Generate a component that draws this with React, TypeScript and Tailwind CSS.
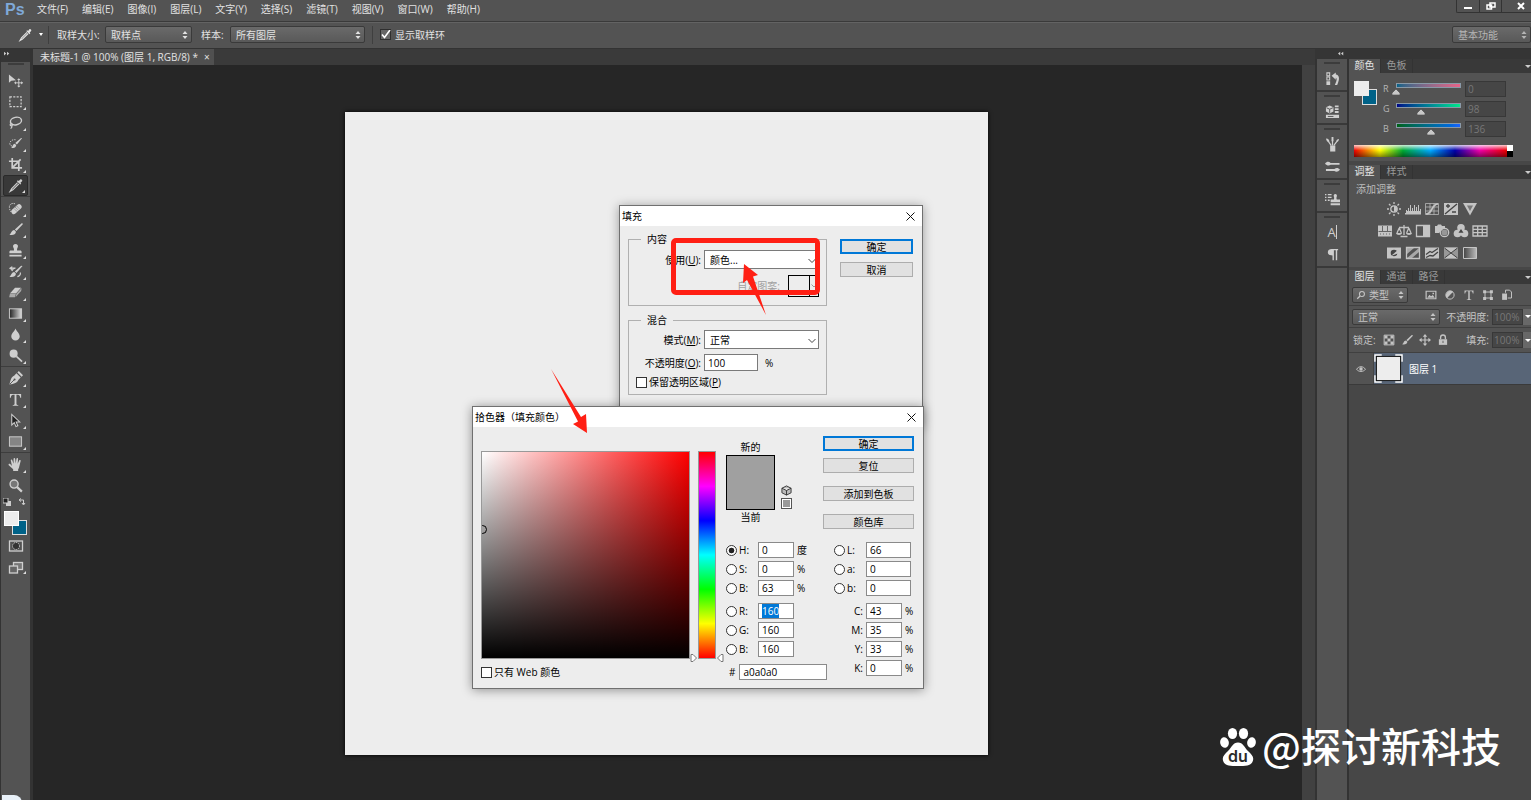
import { useEffect, useRef, useState } from 'react';
import type { ReactNode } from 'react';

const MENUS = ['文件(F)', '编辑(E)', '图像(I)', '图层(L)', '文字(Y)', '选择(S)', '滤镜(T)', '视图(V)', '窗口(W)', '帮助(H)'];

function Icon({ children, className = 'w-4 h-4' }: { children: ReactNode; className?: string }) {
  return (
    <svg viewBox="0 0 16 16" fill="currentColor" className={`shrink-0 ${className}`} aria-hidden="true">
      {children}
    </svg>
  );
}

const line = { fill: 'none', stroke: 'currentColor', strokeWidth: 1.3 };

const ICONS: Record<string, ReactNode> = {
  move: <><path d="M1 1.500v9l2.500-2.200 5-.6z" /><path {...line} strokeWidth={1} d="M11.5 6.500v8M7.500 10.500h8" /><path d="M11.500 5.500l1.800 2h-3.600zM11.500 15.500l1.800-2h-3.600zM6.500 10.500l2-1.800v3.600zM16 10.500l-2-1.800v3.600z" /></>,
  marquee: <rect {...line} x="2" y="3" width="12" height="10.500" strokeDasharray="2.200 1.400" />,
  lasso: <><ellipse {...line} strokeWidth={1.500} cx="8.500" cy="6.500" rx="6" ry="4" transform="rotate(-12 8.500 6.500)" /><path {...line} d="M3.500 9.200c-1.800.3-1.500 2.500.2 2.300 1.500-.2 1.300-1.800.2-2.300M4 11.500c.5 1.300-.3 2.500-1.300 2.800" /></>,
  quick: <><path {...line} strokeWidth={1} strokeDasharray="1.500 1.200" d="M7 10.500C4 11.500 1.500 10 2 7.500S5 3.500 8 4" /><path d="M15 2.500L9.500 9l-1.800-1.500L14 2zM8.800 9.700L7 8.200C5 8.500 5.500 11 3.500 12.500c2.500 1 5 .3 5.300-2.800z" /></>,
  crop: <path {...line} strokeWidth={1.800} d="M4.500 1v10.500H15M1 4.500h10.500V15M13.500 2.500l-8 8" />,
  dropper: <><path d="M9.500 3.500l1-1 1 .800 1.500-1.800c1-1 3 .800 2 2L13.300 5l.8 1-1 1z" /><path {...line} d="M10.200 5L4 11.200 2.300 14.200 5.200 12.600 11.600 6.300" /></>,
  heal: <><path {...line} strokeWidth={1} strokeDasharray="1.500 1" d="M7.500 3C4 1.500 1 4 1.500 7s1 4 1.500 4.500" /><rect x="2.500" y="6" width="13" height="5.500" rx="2.500" transform="rotate(-42 9 8.700)" /><path d="M7.800 6.700l3.500 3.500M6.700 8.300l3 3M9.500 5.700l3 3" stroke="#555" strokeWidth=".8" strokeDasharray="1 .800" /></>,
  brush: <path d="M15.500 1.500c.5.500.3 1-.2 1.500L9 9.500 7.300 8 14 1.800c.5-.4 1-.6 1.500-.3zM6.700 8.600l1.800 1.700c-.3 3-3.500 4.200-7 3.200 2.200-.8 1.800-4.600 5.200-4.900z" />,
  stamp: <path d="M8 1a2.600 2.600 0 0 1 2.300 3.800c-.6 1-.8 2-.6 3.200H13c1 0 1.500.6 1.500 1.500V11h-13V9.500C1.500 8.600 2 8 3 8h3.300c.2-1.200 0-2.200-.6-3.200A2.600 2.600 0 0 1 8 1zM1.500 12.500h13v2h-13z" />,
  history: <><path d="M15.500 2L9 9.500 7.300 8 14 1.800zM6.700 8.600l1.800 1.700c-.3 3-3.500 4.200-7 3.200 2.200-.8 1.800-4.600 5.200-4.900z" /><path {...line} d="M3 4.500h5c-2 0-3 1-4 3M13 9c1 2-1 4-3 4.500" /><path d="M1 4.500L4.500 2v5z" /></>,
  eraser: <><path d="M7.500 3h6.500L8.500 9H2z" /><path d="M2 9.600h6.300l-.8 3.400H1.200zM9 9.300L14.600 3.200l-.6 3.300L8.200 12.800z" opacity=".7" /></>,
  gradient: <><defs><linearGradient id="g1"><stop stopColor="#222" /><stop offset="1" stopColor="#ddd" /></linearGradient></defs><rect x="1.500" y="3" width="13" height="10" fill="url(#g1)" stroke="currentColor" /></>,
  blur: <path d="M8 1.500c1 3 4.500 5 4.500 8.500a4.500 4.500 0 0 1-9 0C3.500 6.500 7 4.500 8 1.500z" />,
  dodge: <><circle cx="6" cy="6" r="4.300" /><path {...line} strokeWidth={1.800} d="M9 9l6 5.500" /></>,
  pen: <><path d="M9 2.500l4.500 4.500L11 9.500c-1 3-4.500 3.800-9.500 5 1.300-5 2-8.500 5-9.500z" /><path d="M10 1.500L11.500 0 16 4.500 14.500 6z" /><path d="M2 14l4.500-4.500" stroke="#535353" /><circle cx="7" cy="9" r="1.100" fill="#535353" /></>,
  text: <path d="M2 2h12v4h-1C12.700 3.800 12 3 10.500 3H9v9.500c0 1 .5 1.300 2 1.500v.7H5V14c1.500-.2 2-.5 2-1.500V3H5.500C4 3 3.300 3.800 3 6H2z" />,
  path: <path d="M4 1.500v11.300l2.700-2.500 1.800 4.200 2-.9-1.800-4H12.500z" fill="#222" stroke="currentColor" strokeWidth="1.100" />,
  rect: <rect x="1.500" y="3" width="13" height="10" fill="#858585" stroke="currentColor" />,
  hand: <path d="M4.200 9.500L3 3.800c-.2-1 1.200-1.500 1.600-.4L6 7.300 5.900 2c0-1.200 1.700-1.200 1.800 0L8.200 7 9 1.800c.2-1.200 1.800-1 1.700.2L10.300 7.300l1.600-3.600c.5-1 1.900-.5 1.600.5L12 10c-.3 1.500-.5 2-1.200 3v2H5.500v-2L.8 8.800C0 7.800 1.300 6.800 2.300 7.500z" />,
  zoom: <><circle cx="6.500" cy="6.500" r="4.300" fill="#777" stroke="currentColor" strokeWidth="1.500" /><path {...line} strokeWidth={2.400} d="M9.800 9.800l5 4.700" /></>,
  mask: <><rect {...line} x="1.500" y="3" width="13" height="10" /><circle cx="8" cy="8" r="3.500" fill="#333" stroke="currentColor" strokeDasharray="1.200 .8" /></>,
  screen: <><rect {...line} x="5.500" y="2.500" width="9" height="7" fill="#777" /><rect {...line} x="1.500" y="6" width="8" height="7" fill="#666" /></>,
  histPanel: <><path {...line} strokeWidth={1.100} d="M2 2h3v3H2zM2 6.500h3v3H2z" /><path d="M1.500 11h4v4h-4zM7 5l4.500-3.500v2.300c4 .3 4.500 5 1.500 11h-2.500c2-3.500 2.500-7 1-7.500v2z" /></>,
  propPanel: <><path d="M1 3.500l4-2 4 2v4.500l-4 2-4-2zM10.500 1.500h4v2h-4zM10.500 4.500h4v2h-4zM10.500 7.500h4v2h-4zM1 11.500h14V15H1z" /><path d="M1.500 4l3.500 1.500L8.500 4M5 5.500V9.500M3 13.300h6" stroke="#555" fill="none" /></>,
  brushes: <><path d="M5.500 9h5.500v6.500H5.500z" /><path {...line} d="M6.500 9L3.500 4.500M8 9V3M9.500 9l3-4" /><path d="M1 1.500c3 0 4 2 3.500 4C2.500 5.500 1.500 4 1 1.500zM7 0h2v4.500H7zM15 2c-.5 2.500-1.500 3.500-3 3.500C11.500 3.500 13 2 15 2z" /></>,
  presets: <><path d="M0 5c2-2.500 4-2.500 6-.8h9.500v2H6C4 7.500 2 7 0 5zM16 11.500c-2-2.500-4-2.500-6-.8H1v2h9c2 1.500 4 1 6-1.200z" /></>,
  clone: <><path d="M11 2c1.500 0 2.200 1.500 1.500 3-.4.800-.3 2 0 3H16v3H6V8h3.500c.3-1 .4-2.200 0-3C8.800 3.500 9.500 2 11 2zM6 12h10v2H6zM0 2h1.500v1.500H0zM3 2h4v1.500H3zM0 5h1.500v1.500H0zM3 5h4v1.500H3zM0 8h1.500v1.500H0zM3 8h2v1.500H3z" /></>,
  para: <path d="M7 2h7v1.500h-1V14h-1.500V3.500h-2V14H8V9C5 9 3 8 3 5.500S5 2 7 2z" />,
  sun: <><circle {...line} cx="8" cy="8" r="3.200" /><path d="M8 5v6a3 3 0 0 0 0-6z" /><path {...line} d="M8 1v2M8 13v2M1 8h2M13 8h2M3 3l1.500 1.500M11.500 11.500L13 13M3 13l1.500-1.500M11.500 4.500L13 3" /></>,
  levels: <path d="M0 12h16v1.500H0zM1 9h1v3H1zM3 7h1v5H3zM5 4h1v8H5zM7 7h1v5H7zM9 4h1v8H9zM11 6h1v6h-1zM13 4h1v8h-1zM15 8h1v4h-1zM2 10h13v2H2z" />,
  curves: <><path {...line} strokeWidth={1} d="M1.500 2.500h13v11h-13zM1.500 6h13M1.500 10h13M6 2.500v11M10 2.500v11" opacity=".7" /><path {...line} strokeWidth={1.700} d="M2 13c7 0 5-10 12-10" /></>,
  exposure: <><path d="M1 2h14v12H1z" /><path d="M2 13L14 3M3 5h4M5 3v4M9 11h4" stroke="#444" strokeWidth="1.300" /></>,
  vibrance: <><path d="M1 2h14L8 14.500z" /><path d="M5 4.500h6L8 10z" fill="#777" /></>,
  hue: <><path d="M1 2.500h14v11H1z" /><path d="M1.500 8.500h13M5.500 3v5M10.500 3v5M3 11h1M6 11h1M9 11h1M12 11h1" stroke="#666" /></>,
  balance: <><path {...line} d="M8 2v10M3 4.500h10M4.500 13.500h7M3.200 5L1 10M3.200 5l2.200 5M12.800 5l-2.200 5M12.800 5L15 10" /><path d="M0 10h6c0 2.500-6 2.500-6 0zM10 10h6c0 2.500-6 2.500-6 0z" /></>,
  bw: <><path {...line} d="M1.500 2.500h13v11h-13z" /><path d="M8 2.500h6.500v11H8z" /></>,
  photo: <><path d="M1 3h2l1-1.500h3L8 3h3v3H9L5 10H1z" /><circle {...line} cx="10.500" cy="9.500" r="4.200" /><circle cx="10.500" cy="9.500" r="3" opacity=".6" /></>,
  mixer: <><circle cx="8" cy="4.800" r="3.800" /><circle cx="4.500" cy="10.500" r="3.800" /><circle cx="11.500" cy="10.500" r="3.800" /><path d="M8 6l2.500 3.800h-5z" fill="#444" /></>,
  lut: <><path {...line} d="M1 3h14v10H1zM1 6.300h14M1 9.700h14M5.700 3v10M10.300 3v10" /></>,
  invert: <><path d="M1 2.500h14v11H1z" /><circle cx="8" cy="8" r="3.300" fill="#444" /><path d="M5 11L13 4v4z" /></>,
  poster: <><path {...line} d="M1.500 2.500h13v11h-13z" /><path d="M2 13l12-10v4L7 13zM2 3h7L2 9z" opacity=".75" /></>,
  thresh: <><path d="M1 2.500h14v11H1z" /><path d="M2 9.500l4-3 2 1 6-4M2 12.500l4-2 3 .5 5-4" stroke="#444" strokeWidth="1.300" fill="none" /></>,
  select: <><path d="M1 2.500h14v11H1z" opacity=".6" /><path d="M1 2.500L8 8l7-5.500zM1 13.500L8 8l7 5.500z" /><path d="M1.500 3l13 10M1.500 13l13-10" stroke="#444" /></>,
  map: <><defs><linearGradient id="g2"><stop stopColor="#444" /><stop offset="1" stopColor="#bbb" /></linearGradient></defs><path d="M1.500 2.500h13v11h-13z" fill="url(#g2)" stroke="currentColor" /></>,
  image: <><path {...line} strokeWidth={1.600} d="M1.500 3h13v10h-13z" /><path d="M3 11.500l3-4 2 2 2.500-1.500 2.500 3.500zM10 5h2v2h-2z" /></>,
  adjust: <><circle {...line} cx="8" cy="8" r="5.500" /><path d="M3.800 12.200A6 6 0 0 1 12.200 3.800z" /></>,
  shape: <><path {...line} d="M4 4h8v8H4z" /><path d="M1.500 1.500h4v4h-4zM10.500 1.500h4v4h-4zM1.500 10.500h4v4h-4zM10.500 10.500h4v4h-4z" /></>,
  smart: <><path d="M1.500 6H8v8.500H1.500z" /><path {...line} d="M6 5V1.500h5.500L14 4v8H9" /></>,
  find: <><circle {...line} strokeWidth={1.700} cx="9.500" cy="6.500" r="4" /><path {...line} strokeWidth={2} d="M6.500 9.500L2 14" /></>,
  checker: <><path {...line} d="M1.500 1.500h13v13h-13z" /><path d="M2 2h4v4H2zM10 2h4v4h-4zM6 6h4v4H6zM2 10h4v4H2zM10 10h4v4h-4z" /></>,
  arrows: <><path {...line} strokeWidth={1.600} d="M8 2v12M2 8h12" /><path d="M8 0l3 3.500H5zM8 16l3-3.500H5zM0 8l3.500-3v6zM16 8l-3.500-3v6z" /></>,
  lock: <><path {...line} strokeWidth={1.800} d="M4.800 7V4.500a3.200 3.200 0 0 1 6.400 0V7" /><path d="M2.500 7h11v7.500h-11z" /><path d="M7.500 9h1v3h-1z" fill="#444" /></>,
  eye: <><path {...line} strokeWidth={1.600} d="M1 8.500c3-5.500 11-5.500 14 0-3 4.500-11 4.500-14 0z" /><circle cx="8" cy="8" r="2.800" /></>,
};

const TOOLS = [
  [['move', '移动'], ['marquee', '选框'], ['lasso', '套索'], ['quick', '快速选择'], ['crop', '裁剪'], ['dropper', '吸管']],
  [['heal', '修复画笔'], ['brush', '画笔'], ['stamp', '图章'], ['history', '历史画笔'], ['eraser', '橡皮擦'], ['gradient', '渐变'], ['blur', '模糊'], ['dodge', '减淡']],
  [['pen', '钢笔'], ['text', '文字'], ['path', '路径选择'], ['rect', '矩形']],
  [['hand', '抓手'], ['zoom', '缩放']],
];

const DOCK = [['histPanel'], ['propPanel'], ['brushes', 'presets'], ['clone'], ['char', 'para']];

const ADJUST = [
  ['sun', 'levels', 'curves', 'exposure', 'vibrance'],
  ['hue', 'balance', 'bw', 'photo', 'mixer', 'lut'],
  ['invert', 'poster', 'thresh', 'select', 'map'],
];

const CHANNELS = [
  { name: 'R', value: 0, track: 'bg-linear-to-r from-[#006288] to-[#e86288]' },
  { name: 'G', value: 98, track: 'bg-linear-to-r from-[#000088] to-[#10e888]' },
  { name: 'B', value: 136, track: 'bg-linear-to-r from-[#006210] to-[#1c62ff]' },
];

function DarkSelect({ label, value, className, pad = 'pl-[5px]' }: { label: string; value: string; className: string; pad?: string }) {
  return (
    <div className={`relative ${className}`}>
      <select aria-label={label} className={`block w-full h-full appearance-none rounded-xs border border-[#3a3a3a] bg-linear-to-b from-[#6a6a6a] to-[#595959] outline-none ${pad}`}>
        <option>{value}</option>
      </select>
      <svg viewBox="0 0 6 8" className="absolute right-1 top-1/2 -mt-1 w-1.5 h-2" fill="currentColor"><path d="M3 0l2.500 3h-5zM3 8l2.500-3h-5z" /></svg>
    </div>
  );
}

function LightSelect({ id, value, className }: { id: string; value: string; className: string }) {
  return (
    <div className={`relative ${className}`}>
      <select id={id} className="block w-full h-full appearance-none border border-[#7a7a7a] bg-white pl-[5px] outline-none">
        <option>{value}</option>
      </select>
      <svg viewBox="0 0 8 6" className="absolute right-[3px] top-1/2 -mt-0.5 w-2 h-1.5" fill="none" stroke="#444"><path d="M.5 1L4 4.500 7.500 1" /></svg>
    </div>
  );
}

function DialogButton({ children, primary }: { children: ReactNode; primary?: boolean }) {
  return (
    <button className={`flex h-[15px] w-full items-center justify-center bg-[#e1e1e1] ${primary ? 'border-2 border-[#0078d7]' : 'border border-[#adadad]'}`}>
      {children}
    </button>
  );
}

function TitleBar({ title }: { title: string }) {
  return (
    <div className="flex h-5 items-center justify-between bg-white pl-0.5 pr-[7px]">
      <h2>{title}</h2>
      <button aria-label="关闭">
        <svg viewBox="0 0 9 9" className="w-[9px] h-[9px]" stroke="#111" fill="none"><path d="M.5.5l8 8M8.500.5l-8 8" /></svg>
      </button>
    </div>
  );
}

const checkbox = 'w-[11px] h-[11px] appearance-none border border-[#333] bg-white';

function FillDialog() {
  return (
    <section className="absolute left-[274px] top-[93px] w-[304px] border border-[#707070] bg-[#ededed] shadow-[0_1px_10px_rgba(0,0,0,0.35)]">
      <TitleBar title="填充" />
      <div className="flex gap-[13px] pl-2 pr-[9px] pt-[5px] pb-8">
        <div className="flex flex-1 flex-col gap-1.5">
          <fieldset className="h-[75px] border border-[#b0b0b0] pr-[7px]">
            <legend className="ml-3 px-1.5 h-4 leading-4">内容</legend>
            <div className="mt-[3px] flex items-center justify-end gap-[3px]">
              <label htmlFor="use">使用(<u>U</u>):</label>
              <LightSelect id="use" value="颜色..." className="w-[115px] h-[19px]" />
            </div>
            <div className="mt-1.5 flex items-center justify-end gap-2 text-[#a0a0a0]">
              <span>自定图案:</span>
              <button aria-label="图案" className="flex w-[31px] h-[22px] border border-black">
                <span className="flex-1 border-r border-black h-full" />
                <svg viewBox="0 0 8 6" className="w-2 h-5" fill="none" stroke="#999"><path d="M1.500 1.500L4 4l2.500-2.500" /></svg>
              </button>
            </div>
          </fieldset>
          <fieldset className="h-[83px] border border-[#b0b0b0] pr-[7px]">
            <legend className="ml-3 px-1.5 h-4 leading-4">混合</legend>
            <div className="mt-0.5 flex items-center justify-end gap-[3px]">
              <label htmlFor="mode">模式(<u>M</u>):</label>
              <LightSelect id="mode" value="正常" className="w-[115px] h-[19px]" />
            </div>
            <div className="mt-[5px] flex items-center justify-end gap-[3px]">
              <label htmlFor="opacity">不透明度(<u>O</u>):</label>
              <div className="flex w-[115px] items-center gap-[7px]">
                <input id="opacity" defaultValue="100" className="w-[54px] h-[17px] border border-[#7a7a7a] bg-white px-[3px] outline-none" />
                %
              </div>
            </div>
            <label className="ml-[7px] mt-1 flex items-center gap-0.5">
              <input type="checkbox" className={checkbox} />
              <span>保留透明区域(<u>P</u>)</span>
            </label>
          </fieldset>
        </div>
        <div className="flex w-[73px] flex-col gap-2 pt-2">
          <DialogButton primary>确定</DialogButton>
          <DialogButton>取消</DialogButton>
        </div>
      </div>
    </section>
  );
}

const numBox = 'h-4 border border-[#8a8a8a] bg-white px-[3px] outline-none selection:bg-[#0078d7] selection:text-white';

function ModelRow({ name, value, unit, active, focused, onPick }: { name: string; value: string; unit?: string; active: boolean; focused: boolean; onPick: () => void }) {
  const ref = useRef<HTMLInputElement>(null);
  useEffect(() => {
    if (focused) {
      ref.current?.focus();
      ref.current?.select();
    }
  }, [focused]);
  return (
    <div className="flex h-4 items-center">
      <label className="flex w-8 items-center gap-0.5">
        <input type="radio" name="model" checked={active} onChange={onPick} className="w-[11px] h-[11px] appearance-none rounded-full border border-[#333] bg-white checked:bg-[radial-gradient(circle,#222_40%,#fff_50%)]" />
        {name}:
      </label>
      <input ref={ref} aria-label={name} defaultValue={value} className={`${numBox} ${unit === undefined ? 'w-[45px]' : 'w-9'}`} />
      <span className="pl-[3px]">{unit}</span>
    </div>
  );
}

function PickerDialog() {
  const [model, setModel] = useState('H');
  const row = (key: string, name: string, value: string, unit?: string) => (
    <ModelRow key={key} name={name} value={value} unit={unit} active={model === key} focused={key === 'R'} onPick={() => setModel(key)} />
  );
  return (
    <section className="absolute left-[127px] top-[294px] w-[452px] border border-[#707070] bg-[#ededed] shadow-[0_1px_10px_rgba(0,0,0,0.4)]">
      <TitleBar title="拾色器（填充颜色）" />
      <div className="flex pl-2 pr-[9px] pt-[9px] pb-2">
        <div className="pt-[15px]">
          <div className="flex gap-2">
            <div className="relative w-[209px] h-[208px] overflow-hidden border border-[#999] bg-[linear-gradient(to_top,#000,transparent),linear-gradient(to_right,#fff,#f00)]">
              <span className="absolute -left-1 top-[73px] w-[9px] h-[9px] rounded-full border border-black" />
            </div>
            <div className="relative w-[18px] h-[208px] border border-[#999] bg-[linear-gradient(to_bottom,#f00,#f0f,#00f,#0ff,#0f0,#ff0,#f00)]">
              <svg viewBox="0 0 34 8" className="absolute -left-[9px] -bottom-1 w-[34px] h-2" fill="#fff" stroke="#777"><path d="M1 .5h2L6.500 4 3 7.500H1zM33 .5h-2L27.500 4 31 7.500h2z" /></svg>
            </div>
          </div>
          <label className="mt-1.5 flex items-center gap-0.5">
            <input type="checkbox" className={checkbox} />
            只有 Web 颜色
          </label>
        </div>
        <div className="ml-2.5 flex-1">
          <div className="flex h-[106px] justify-between">
            <div className="flex gap-1.5 pt-1">
              <div className="w-[49px] text-center leading-[15px]">
                <p>新的</p>
                <div className="h-[55px] border border-black bg-[#a0a0a0]" />
                <p>当前</p>
              </div>
              <div className="flex flex-col items-center gap-0.5 pt-[45px]">
                <svg viewBox="0 0 12 12" className="w-[11px] h-[11px]" fill="#bbb" stroke="#333"><path d="M1 3.500L6 1l5 2.500v5L6 11 1 8.500zM1 3.500L6 6l5-2.500M6 6v5" /></svg>
                <span className="w-[11px] h-[11px] border border-[#555] bg-[#999] outline-1 -outline-offset-2 outline-white" />
              </div>
            </div>
            <div className="flex w-[91px] flex-col">
              <DialogButton primary>确定</DialogButton>
              <div className="mt-[7px] flex flex-col gap-[13px]">
                <DialogButton>复位</DialogButton>
                <DialogButton>添加到色板</DialogButton>
                <DialogButton>颜色库</DialogButton>
              </div>
            </div>
          </div>
          <div className="flex justify-between">
            <div>
              <div className="flex flex-col gap-[3px]">
                {row('H', 'H', '0', '度')}
                {row('S', 'S', '0', '%')}
                {row('Br', 'B', '63', '%')}
              </div>
              <div className="mt-[7px] flex flex-col gap-[3px]">
                {row('R', 'R', '160', '')}
                {row('G', 'G', '160', '')}
                {row('B', 'B', '160', '')}
              </div>
              <div className="mt-[7px] flex items-center gap-1 pl-[3px]">
                <label htmlFor="hex">#</label>
                <input id="hex" defaultValue="a0a0a0" className={`${numBox} w-22`} />
              </div>
            </div>
            <div className="w-20">
              <div className="flex flex-col gap-[3px]">
                {row('L', 'L', '66')}
                {row('a', 'a', '0')}
                {row('b', 'b', '0')}
              </div>
              <div className="mt-[7px] flex flex-col gap-[3px]">
                {[['C', '43'], ['M', '35'], ['Y', '33'], ['K', '0']].map(([name, value]) => (
                  <div key={name} className="flex h-4 items-center">
                    <label htmlFor={`cmyk-${name}`} className="w-8 pr-[3px] text-right">{name}:</label>
                    <input id={`cmyk-${name}`} defaultValue={value} className={`${numBox} w-9`} />
                    <span className="pl-[3px]">%</span>
                  </div>
                ))}
              </div>
            </div>
          </div>
        </div>
      </div>
    </section>
  );
}

function Corner() {
  return <span className="absolute bottom-0.5 right-0.5 border-b-[3px] border-l-[3px] border-b-[#ddd] border-l-transparent" />;
}

function Toolbar() {
  return (
    <aside className="flex w-[33px] shrink-0 flex-col border-l border-r-3 border-[#333] bg-[#535353] text-[#cfcfcf]">
      <div className="h-[13px] bg-[#353535] pl-[3px]">
        <svg viewBox="0 0 8 5" className="w-1.5 h-[9px]" fill="#ccc"><path d="M0 0l3 2.500L0 5zM4 0l3 2.500L4 5z" /></svg>
      </div>
      <div className="mx-auto mt-px mb-[5px] h-0.5 w-4 bg-[#3c3c3c]" />
      {TOOLS.map((group, i) => (
        <div key={i} className={i > 0 ? 'border-t border-[#3d3d3d] pt-px' : ''}>
          {group.map(([icon, label]) => (
            <button key={icon} aria-label={label} className={`relative mx-auto flex h-[21px] w-[25px] items-center justify-center ${icon === 'dropper' ? 'rounded-xs border border-[#2a2a2a] bg-[#383838]' : ''}`}>
              <Icon className="w-[15px] h-[15px]">{ICONS[icon]}</Icon>
              {icon !== 'move' && icon !== 'zoom' && <Corner />}
            </button>
          ))}
        </div>
      ))}
      <div className="flex h-3 items-center justify-between pl-0.5 pr-1">
        <svg viewBox="0 0 8 8" className="w-2 h-2"><path d="M3 3h5v5H3z" fill="#ccc" /><path d="M0 0h5v5H0z" fill="#222" stroke="#ccc" /></svg>
        <svg viewBox="0 0 8 8" className="w-2 h-2" fill="none" stroke="currentColor"><path d="M2 2h3.500v4M3 .5L1 2l2 1.500M4 5l1.500 2L7 5" /></svg>
      </div>
      <div className="relative ml-[3px] mt-[3px] h-6 w-[23px]">
        <span className="absolute bottom-0 right-0 w-[15px] h-[15px] border border-[#ddd] bg-[#006288]" />
        <span className="absolute left-0 top-0 w-[15px] h-[15px] border border-white bg-[#ededed]" />
      </div>
      <button aria-label="快速蒙版" className="mt-[3px] flex h-4 justify-center"><Icon>{ICONS.mask}</Icon></button>
      <button aria-label="屏幕模式" className="relative mx-auto mt-1.5 flex h-4 w-[25px] justify-center">
        <Icon>{ICONS.screen}</Icon>
        <Corner />
      </button>
    </aside>
  );
}

function PanelTabs({ tabs }: { tabs: string[] }) {
  return (
    <div className="flex h-3.5 items-stretch bg-[#393939] leading-3">
      {tabs.map((tab, i) => (
        <button key={tab} className={`w-8 border-r border-[#333] pb-0.5 ${i === 0 ? 'bg-[#535353] text-[#e4e4e4]' : 'text-[#9a9a9a]'}`}>{tab}</button>
      ))}
      <span className="ml-auto mt-1.5 h-0 border-x-[3px] border-t-[3px] border-x-transparent border-t-[#ccc]" />
    </div>
  );
}

function PercentField({ id }: { id: string }) {
  return (
    <>
      <input id={id} defaultValue="100%" className="h-4 w-[31px] border border-[#383838] bg-[#464646] px-px text-[#777] outline-none" />
      <span className="flex h-4 w-2 items-center bg-[#686868]"><i className="ml-0.5 border-x-[3px] border-t-[3px] border-x-transparent border-t-white" /></span>
    </>
  );
}

function Panels() {
  return (
    <aside className="w-[184px] shrink-0 border-l-2 border-[#333] bg-[#474747]">
      <section className="bg-[#535353]">
        <PanelTabs tabs={['颜色', '色板']} />
        <div className="px-[5px] pt-2 pb-1">
          <div className="flex">
            <div className="relative h-6 w-[23px]">
              <span className="absolute bottom-0 right-0 w-[15px] h-4 border border-[#ddd] bg-[#006288]" />
              <span className="absolute left-0 top-0 w-[15px] h-[15px] bg-[#ededed]" />
            </div>
            <div className="flex flex-1 flex-col gap-1 pl-1.5">
              {CHANNELS.map((c) => (
                <div key={c.name} className="flex h-4 items-center text-[9px] text-[#b5b5b5]">
                  <label htmlFor={`ch-${c.name}`} className="w-[13px]">{c.name}</label>
                  <div className="relative h-4 w-[65px] pt-0.5">
                    <div className={`h-[5px] border border-[#8a9aa8] ${c.track}`} />
                    <svg viewBox="0 0 8 6" className="absolute top-2 -ml-1 w-2 h-1.5" style={{ left: `${(c.value / 255) * 100}%` }} fill="#c8c8c8" stroke="#333" strokeWidth=".5"><path d="M4 0l4 4v2H0V4z" /></svg>
                    <input id={`ch-${c.name}`} type="range" min={0} max={255} defaultValue={c.value} className="absolute inset-0 w-full opacity-0" />
                  </div>
                  <input aria-label={`${c.name} 值`} defaultValue={c.value} className="ml-1 h-4 w-[41px] border border-[#383838] bg-[#464646] px-0.5 text-[10px] text-[#777] outline-none" />
                </div>
              ))}
            </div>
          </div>
          <div className="mt-2 flex h-3 w-[159px]">
            <div className="flex-1 bg-[linear-gradient(to_bottom,rgba(255,255,255,0.8),transparent_45%,rgba(0,0,0,0.45)),linear-gradient(to_right,#e00,#ff0_17%,#0a3_32%,#0af_50%,#00a_66%,#e0a_82%,#e00)]" />
            <div className="w-1.5 bg-linear-to-b from-white from-50% to-black to-50%" />
          </div>
        </div>
      </section>
      <section className="mt-1 bg-[#535353]">
        <PanelTabs tabs={['调整', '样式']} />
        <p className="pt-0.5 pl-[7px] text-[#bdbdbd] leading-4">添加调整</p>
        <div className="mr-4 flex flex-col items-center gap-1.5 pt-1 pb-1.5 text-[#c4c4c4]">
          {ADJUST.map((row, i) => (
            <div key={i} className="flex gap-[3px]">
              {row.map((name) => <button key={name} aria-label={name}><Icon>{ICONS[name]}</Icon></button>)}
            </div>
          ))}
        </div>
      </section>
      <section className="mt-[3px] bg-[#535353] text-[#c4c4c4]">
        <PanelTabs tabs={['图层', '通道', '路径']} />
        <div className="flex h-[22px] items-center border-b border-[#404040] pl-[3px]">
          <div className="relative">
            <DarkSelect label="筛选" value="类型" className="h-4 w-14" pad="pl-4" />
            <Icon className="absolute left-1 top-[3px] w-2.5 h-2.5">{ICONS.find}</Icon>
          </div>
          <div className="ml-[17px] flex gap-[7px]">
            {['image', 'adjust', 'text', 'shape', 'smart'].map((name) => <button key={name} aria-label={name}><Icon className="w-3 h-3">{ICONS[name]}</Icon></button>)}
          </div>
        </div>
        <div className="flex h-[22px] items-center border-b border-[#404040] pl-[3px]">
          <DarkSelect label="混合模式" value="正常" className="h-4 w-22" />
          <label htmlFor="layer-opacity" className="ml-auto mr-[3px]">不透明度:</label>
          <PercentField id="layer-opacity" />
        </div>
        <div className="flex h-[25px] items-center border-b border-[#404040] pl-1">
          <span>锁定:</span>
          <div className="ml-[7px] flex gap-1.5">
            {['checker', 'brush', 'arrows', 'lock'].map((name) => <button key={name} aria-label={name}><Icon className="w-3 h-3">{ICONS[name]}</Icon></button>)}
          </div>
          <label htmlFor="layer-fill" className="ml-auto mr-[3px]">填充:</label>
          <PercentField id="layer-fill" />
        </div>
        <div className="flex h-8 items-stretch border-b border-[#3a3a3a]">
          <button aria-label="可见" className="flex w-6 items-center justify-center"><Icon className="w-2.5 h-2.5">{ICONS.eye}</Icon></button>
          <div className="flex flex-1 items-center border-l border-[#444] bg-[#586577] text-white">
            <svg viewBox="0 0 30 30" className="w-[29px] h-[29px]"><rect x="1" y="1" width="28" height="28" fill="none" stroke="#fff" strokeWidth="1.500" strokeDasharray="7 14 14 14 14 14 14 14 7" /><rect x="2.500" y="2.500" width="25" height="25" fill="#ededed" stroke="#111" /></svg>
            <span className="ml-1.5">图层 1</span>
          </div>
        </div>
      </section>
    </aside>
  );
}

function Watermark() {
  return (
    <div className="pointer-events-none absolute bottom-[29px] right-[30px] flex items-center gap-1.5 text-white">
      <svg viewBox="0 0 36 38" className="mt-1 w-9 h-[38px]" fill="#fff">
        <ellipse cx="12.500" cy="5.500" rx="4.600" ry="5.500" />
        <ellipse cx="23.500" cy="5.500" rx="4.600" ry="5.500" />
        <ellipse cx="4.500" cy="14.500" rx="4.300" ry="5.300" transform="rotate(-12 4.500 14.500)" />
        <ellipse cx="31.500" cy="14.500" rx="4.300" ry="5.300" transform="rotate(12 31.500 14.500)" />
        <path d="M18 14.500c5 0 6.500 5 10 8.500s6 5.500 5 9.500c-1.500 5.500-6.500 5.500-15 5.500s-13.500 0-15-5.500c-1-4 1.500-6 5-9.500s5-8.500 10-8.500z" />
        <text x="18" y="33.500" textAnchor="middle" fontSize="16" fontWeight="600" fontFamily="Inter, sans-serif" fill="#2a2a2a">du</text>
      </svg>
      <span className="font-['Noto_Sans_CJK_SC',sans-serif] text-[40px] leading-[52px] font-medium">@探讨新科技</span>
    </div>
  );
}

export default function App() {
  return (
    <div className="relative flex h-screen flex-col overflow-hidden bg-[#535353] font-['Open_Sans','Noto_Sans_CJK_SC',sans-serif] text-[10px] leading-[14px] text-[#e2e2e2]">
      <header className="flex h-[22px] shrink-0 items-start border-b border-[#3a3a3a]">
        <span className="w-8 shrink-0 pl-[5px] font-['Liberation_Sans',sans-serif] text-base leading-5 font-bold text-[#7fa9d8]">Ps</span>
        <nav className="flex gap-3.5 pl-[5px] leading-[18px]">
          {MENUS.map((m) => <button key={m}>{m}</button>)}
        </nav>
        <div className="ml-auto flex h-[13px] rounded-bl-xs border-b border-l border-[#333] text-white">
          <button aria-label="最小化" className="flex w-[23px] items-center justify-center border-r border-[#333]"><span className="mt-1 h-0.5 w-2 bg-white" /></button>
          <button aria-label="还原" className="flex w-[22px] items-center justify-center border-r border-[#333]">
            <svg viewBox="0 0 10 8" className="w-2.5 h-2" fill="#535353" stroke="#fff" strokeWidth="1.500"><path d="M4 1h5v4H4zM1 3h4.500v4H1z" /></svg>
          </button>
          <button aria-label="关闭" className="flex w-[29px] items-center justify-center pl-2">
            <svg viewBox="0 0 8 8" className="w-2 h-2" stroke="#fff" strokeWidth="2"><path d="M1 1l6 6M7 1L1 7" /></svg>
          </button>
        </div>
      </header>

      <div className="flex h-[27px] shrink-0 items-center border-t border-[#636363] border-b border-b-[#333] pl-[18px] pb-0.5">
        <Icon className="w-3.5 h-3.5">{ICONS.dropper}</Icon>
        <span className="ml-[7px] border-x-2 border-t-[3px] border-x-transparent border-t-white" />
        <span className="ml-[5px] h-[18px] border-l border-[#3f3f3f]" />
        <span className="ml-2 w-12">取样大小:</span>
        <DarkSelect label="取样大小" value="取样点" className="h-[17px] w-[87px]" />
        <span className="ml-[9px] w-[29px]">样本:</span>
        <DarkSelect label="样本" value="所有图层" className="h-[17px] w-[135px]" />
        <span className="mx-[7px] h-[18px] border-l border-[#3f3f3f]" />
        <label className="relative flex items-center gap-1">
          <input type="checkbox" defaultChecked className="w-[11px] h-[11px] appearance-none border border-[#2f2f2f] bg-[#666]" />
          <svg viewBox="0 0 11 11" className="absolute left-0 top-0.5 w-[11px] h-[11px]" fill="none" stroke="#fff" strokeWidth="1.600"><path d="M2 4.500l2.500 3L10 0" /></svg>
          显示取样环
        </label>
        <DarkSelect label="工作区" value="基本功能" className="ml-auto h-[17px] w-[79px] text-[#b5b5b5]" />
      </div>

      <div className="flex min-h-0 flex-1">
        <Toolbar />
        <main className="flex min-w-0 flex-1 flex-col">
          <div className="flex h-4 shrink-0 bg-[#3a3a3a]">
            <div className="flex items-center gap-1.5 bg-[#505050] pl-[7px] pr-1">
              <span>未标题-1 @ 100% (图层 1, RGB/8) *</span>
              <button aria-label="关闭文档">×</button>
            </div>
          </div>
          <div className="flex min-h-0 flex-1">
            <div className="flex min-w-0 flex-1 items-center justify-center overflow-hidden bg-[#262626] pt-0.5 pr-0.5">
              <div className="relative h-[643px] w-[643px] shrink-0 bg-[#ededed] text-black shadow-[0_0_4px_#000]">
                <FillDialog />
                <PickerDialog />
                <div className="pointer-events-none absolute left-[326px] top-[126px] h-[57px] w-[149px] rounded-[5px] border-5 border-[#ff1f14]" />
                <svg viewBox="0 0 26 52" className="pointer-events-none absolute left-[396px] top-[151px] w-[26px] h-[52px]" fill="#ff1f14"><path d="M3 1l14 11-5 1.500L25 52 6 17l-4 3z" /></svg>
                <svg viewBox="0 0 38 64" className="pointer-events-none absolute left-[205px] top-[257px] w-[38px] h-16" fill="#ff1f14"><path d="M1 0l30 48 5-3 1 19-14-9 5-2.500z" /></svg>
              </div>
            </div>
            <div className="w-[13px] bg-[#414141]" />
          </div>
        </main>
        <div className="flex flex-col">
          <div className="h-2.5 shrink-0 bg-[#353535] pl-[23px]">
            <svg viewBox="0 0 8 5" className="w-1.5 h-[9px]" fill="#ccc"><path d="M3 0L0 2.500 3 5zM7 0L4 2.500 7 5z" /></svg>
          </div>
          <div className="flex flex-1">
            <aside className="w-8 border-l-2 border-[#333] bg-[#535353] text-[#cfcfcf]">
              {DOCK.map((group, i) => (
                <div key={i} className="flex flex-col items-center gap-1.5 border-b-2 border-[#393939] pt-[3px] pb-1">
                  <span className="h-0.5 w-4 bg-[#3c3c3c]" />
                  {group.map((name) => (
                    <button key={name} aria-label={name} className="flex h-4 w-4 items-center justify-center">
                      {name === 'char' ? <span className="border-r border-[#cfcfcf] text-[13px]">A</span> : <Icon className="w-[15px] h-[15px]">{ICONS[name]}</Icon>}
                    </button>
                  ))}
                </div>
              ))}
            </aside>
            <Panels />
          </div>
        </div>
      </div>

      <div className="absolute -bottom-2 left-0.5 h-[13px] w-5 rounded-tr-lg bg-[#e8f0f8]" />
      <Watermark />
    </div>
  );
}
